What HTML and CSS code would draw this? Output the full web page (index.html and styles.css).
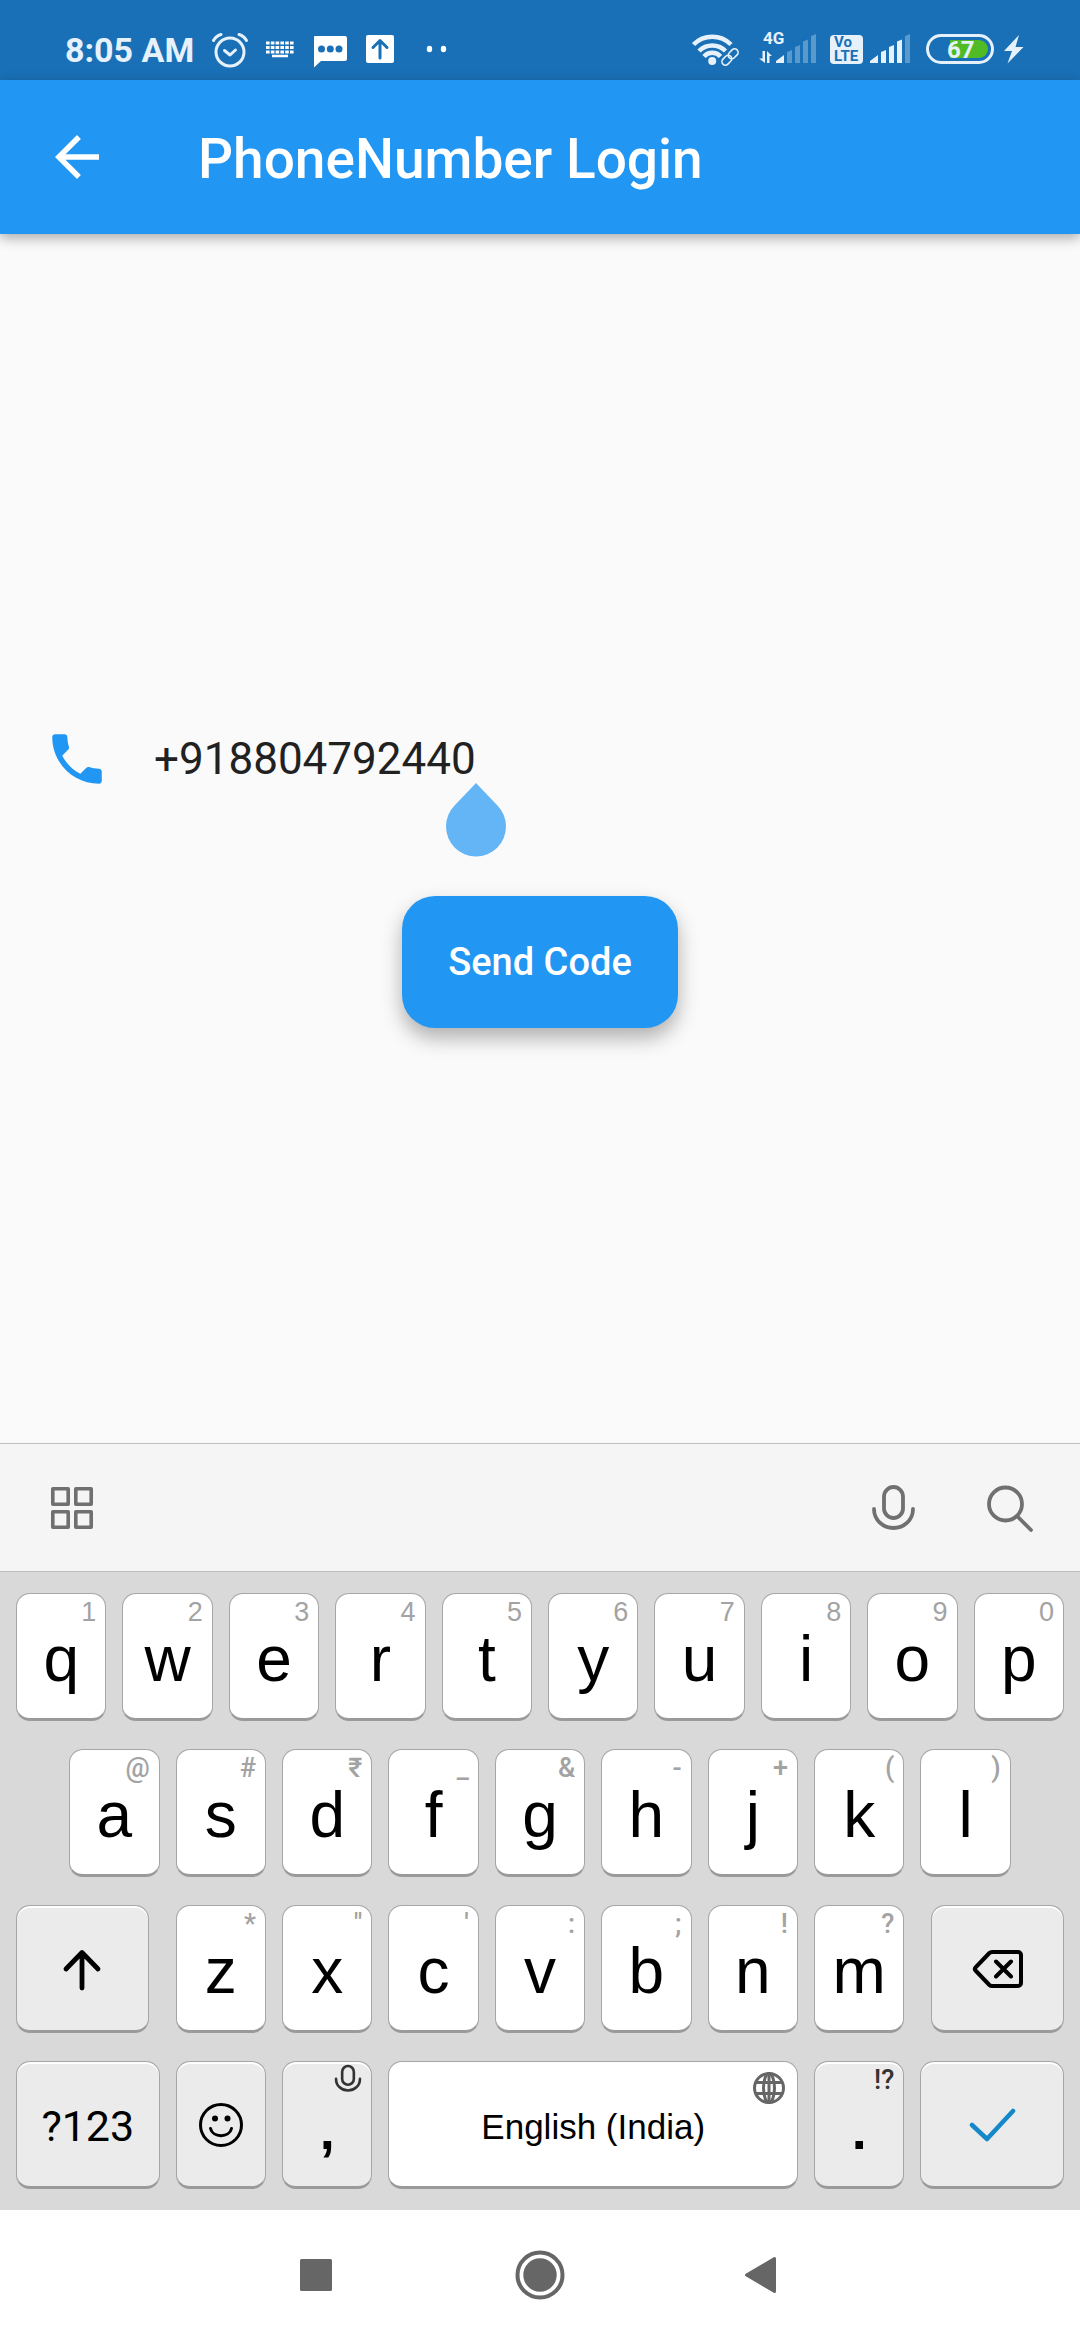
FILE: index.html
```html
<!DOCTYPE html>
<html lang="en">
<head>
<meta charset="utf-8">
<meta name="viewport" content="width=device-width, initial-scale=1">
<title>PhoneNumber Login</title>
<link rel="stylesheet" href="styles.css">
</head>
<body>
<div class="screen">
  <div class="status">
    <div class="status-left">
      <span class="clock">8:05 AM</span>
      <svg width="36" height="36" viewBox="0 0 36 36" fill="none" stroke="#e6f1fb" stroke-width="3" stroke-linecap="round" stroke-linejoin="round"><circle cx="18" cy="20" r="14"/><path d="M12.500 18.500l5.500 4.500 5.500-5M1.500 8.500Q4 4 9 2.500M34.500 8.500Q32 4 27 2.500"/></svg>
      <svg width="36" height="36" viewBox="0 0 36 36" fill="none" stroke="#fff"><path d="M4 11h28M4 15.500h28M4 20h28" stroke-width="3" stroke-dasharray="3.600 1.200"/><path d="M10 24h16" stroke-width="2.500"/></svg>
      <svg width="36" height="36" viewBox="0 0 36 36"><path d="M3 4h30a2 2 0 0 1 2 2v21a2 2 0 0 1-2 2H9l-7 6.500V5a1 1 0 0 1 1-1z" fill="#fff"/><g fill="#1970b6"><circle cx="9.500" cy="17" r="3.500"/><circle cx="18.300" cy="17" r="3.500"/><circle cx="27" cy="17" r="3.500"/></g></svg>
      <svg width="36" height="36" viewBox="0 0 36 36"><rect x="4" y="3" width="28" height="28" rx="2" fill="#fff"/><path d="M18 26V9M11 15.500l7-7 7 7" fill="none" stroke="#1970b6" stroke-width="3" stroke-linecap="round" stroke-linejoin="round"/></svg>
      <svg width="36" height="36" viewBox="0 0 36 36" fill="#fff"><ellipse cx="17.500" cy="17" rx="2.700" ry="3.200"/><ellipse cx="31.500" cy="17" rx="2.700" ry="3.200"/></svg>
    </div>
    <div class="status-right">
      <svg width="60" height="36" viewBox="0 0 60 36" fill="none" stroke="#e6f1fb"><path d="M2.500 12.500A26.500 26.500 0 0 1 40 12.500M8 19A18.500 18.500 0 0 1 34.500 19M13 24.500A11 11 0 0 1 29.500 24.500" stroke-width="4.500"/><circle cx="21.200" cy="29" r="4" fill="#e6f1fb" stroke="none"/><g stroke-width="1.600" transform="rotate(-45 39 25)"><rect x="29" y="21.500" width="11" height="7" rx="3.500"/><rect x="38" y="21.500" width="11" height="7" rx="3.500"/></g></svg>
      <svg width="61" height="36" viewBox="0 0 61 36" fill="#e6f1fb"><text x="4" y="12" class="t-net">4G</text><path d="M3.500 19H6v12L0 26.500h3.500zM8 31V19l5 5h-2.500v7zM17 31v-2l8-6v8z"/><path d="M28 31V20l5-2v13zM36 31V15l5-2v18zM44 31V9.500l5-2V31zM52 31V4l5-2v29z" opacity=".32"/></svg>
      <svg width="34" height="36" viewBox="0 0 34 36" fill="#e6f1fb"><rect x="2" y="3" width="33" height="29" rx="4"/><text x="6" y="15" class="t-vo">Vo</text><text x="6" y="29" class="t-lte">LTE</text></svg>
      <svg width="48" height="36" viewBox="0 0 48 36" fill="#e6f1fb"><path d="M0 31v-2l8-6v8zM11 31V20l5-2v13zM19 31V15l5-2v18zM27 31V9.500l5-2V31z"/><path d="M35 31V4l5-2v29z" opacity=".32"/></svg>
      <svg width="70" height="36" viewBox="0 0 70 36" fill="#e6f1fb"><rect x="1.500" y="3.500" width="65" height="27" rx="13.500" fill="none" stroke="#e6f1fb" stroke-width="3"/><path d="M24 8h29a9 9 0 0 1 0 18H24z" fill="#4fbc26"/><text x="21" y="26" class="t-batt">67</text></svg>
      <svg width="20" height="36" viewBox="0 0 20 36" fill="#e6f1fb"><path d="M15 3L0 19h8L3.500 31.500 19.500 15H11.500z"/></svg>
    </div>
  </div>

  <header class="appbar">
    <button class="icon-btn back" aria-label="Back"><svg width="66" height="66" viewBox="0 0 24 24"><path d="M20 11H7.830l5.590-5.590L12 4l-8 8 8 8 1.410-1.410L7.830 13H20v-2z" fill="#fff"/></svg></button>
    <h1 class="title">PhoneNumber Login</h1>
  </header>

  <main class="content">
    <div class="field">
      <label for="phone" aria-label="Phone number"><svg class="block" width="66" height="66" viewBox="0 0 24 24"><path d="M6.620 10.790c1.440 2.830 3.760 5.140 6.590 6.590l2.200-2.200c.27-.27.67-.36 1.020-.24 1.120.37 2.330.57 3.570.57.55 0 1 .45 1 1V20c0 .55-.45 1-1 1-9.390 0-17-7.610-17-17 0-.55.45-1 1-1h3.500c.55 0 1 .45 1 1 0 1.250.2 2.450.57 3.570.11.35.03.74-.25 1.020l-2.200 2.200z" fill="#2196f3"/></svg></label>
      <div class="input-wrap">
        <input id="phone" class="phone" type="tel" value="+918804792440">
        <svg class="handle" width="60" height="74" viewBox="0 0 60 74"><path d="M30 0L51.200 22.200A30 30 0 1 1 8.800 22.200z" fill="#64b5f6"/></svg>
      </div>
    </div>
    <button class="send">Send Code</button>
  </main>

  <section class="keyboard" aria-label="Keyboard">
    <div class="tools">
      <button class="icon-btn" aria-label="Menu"><svg width="48" height="48" viewBox="0 0 48 48" fill="none" stroke="#707070" stroke-width="3.600" stroke-linejoin="round"><path d="M4.800 4.800h15.400v15.400H4.800zM27.800 4.800h15.400v15.400H27.800zM4.800 27.800h15.400v15.400H4.800zM27.800 27.800h15.400v15.400H27.800z"/></svg></button>
      <div class="tools-right">
        <button class="icon-btn" aria-label="Voice input"><svg width="48" height="48" viewBox="0 0 48 48" fill="none" stroke="#707070" stroke-width="3.800" stroke-linecap="round"><rect x="14" y="3" width="19" height="31" rx="9.500"/><path d="M4 25c0 11 9 19 19.500 19s19.500-8 19.500-19"/></svg></button>
        <button class="icon-btn" aria-label="Search"><svg width="48" height="48" viewBox="0 0 48 48" fill="none" stroke="#707070" stroke-width="3.800" stroke-linecap="round"><circle cx="19.500" cy="20" r="16.500"/><path d="M31.500 32.500L45 46"/></svg></button>
      </div>
    </div>
    <div class="keys">
      <button class="key"><small>1</small>q</button>
      <button class="key"><small>2</small>w</button>
      <button class="key"><small>3</small>e</button>
      <button class="key"><small>4</small>r</button>
      <button class="key"><small>5</small>t</button>
      <button class="key"><small>6</small>y</button>
      <button class="key"><small>7</small>u</button>
      <button class="key"><small>8</small>i</button>
      <button class="key"><small>9</small>o</button>
      <button class="key"><small>0</small>p</button>

      <button class="key row-two"><small class="sym">@</small>a</button>
      <button class="key"><small class="sym">#</small>s</button>
      <button class="key"><small class="sym">₹</small>d</button>
      <button class="key"><small class="sym">_</small>f</button>
      <button class="key"><small class="sym">&amp;</small>g</button>
      <button class="key"><small class="sym">-</small>h</button>
      <button class="key"><small class="sym">+</small>j</button>
      <button class="key"><small class="sym">(</small>k</button>
      <button class="key"><small class="sym">)</small>l</button>

      <button class="key fn wide shift" aria-label="Shift"><svg width="44" height="44" viewBox="0 0 44 44" fill="none" stroke="#000" stroke-width="4.800" stroke-linecap="round" stroke-linejoin="round"><path d="M22 41V6M6 22L22 5.500 38 22"/></svg></button>
      <button class="key"><small class="sym">*</small>z</button>
      <button class="key"><small class="sym">"</small>x</button>
      <button class="key"><small class="sym">'</small>c</button>
      <button class="key"><small class="sym">:</small>v</button>
      <button class="key"><small class="sym">;</small>b</button>
      <button class="key"><small class="sym">!</small>n</button>
      <button class="key"><small class="sym">?</small>m</button>
      <button class="key fn wide erase" aria-label="Backspace"><svg width="52" height="40" viewBox="0 0 52 40" fill="none" stroke="#000" stroke-width="4" stroke-linecap="round" stroke-linejoin="round"><path d="M20 3h26a3 3 0 0 1 3 3v28a3 3 0 0 1-3 3H20q-1.500 0-2.600-1L3.500 21.500q-1.500-1.500 0-3L17.400 4q1.100-1 2.600-1zM24 12.500l15 15M39 12.500l-15 15"/></svg></button>

      <button class="key fn wide mode">?123</button>
      <button class="key fn" aria-label="Emoji"><svg width="46" height="46" viewBox="0 0 46 46" fill="none" stroke="#000" stroke-width="3" stroke-linecap="round"><circle cx="23" cy="23" r="20.500"/><path d="M12.500 26.500c2 9.500 19 9.500 21 0"/><g fill="#000" stroke="none"><circle cx="17" cy="16.500" r="3"/><circle cx="29.500" cy="16.500" r="3"/></g></svg></button>
      <button class="key fn point"><small><svg class="block" width="28" height="28" viewBox="0 0 48 48" fill="none" stroke="#333" stroke-width="4.500" stroke-linecap="round"><rect x="14" y="3.500" width="20" height="32" rx="10"/><path d="M3.500 25.500c0 12 9.500 20 20.500 20s20.500-8 20.500-20"/></svg></small>,</button>
      <button class="key space"><small><svg class="block" width="32" height="32" viewBox="0 0 32 32" fill="none" stroke="#666" stroke-width="3"><circle cx="16" cy="16" r="14.500"/><ellipse cx="16" cy="16" rx="5.500" ry="14.500"/><path d="M16 1.500v29M3 10.500h26M3 21.500h26"/></svg></small>English (India)</button>
      <button class="key fn point"><small class="sym">!?</small>.</button>
      <button class="key fn wide" aria-label="Done"><svg width="48" height="36" viewBox="0 0 48 36" fill="none" stroke="#1488c8" stroke-width="4.500" stroke-linecap="round" stroke-linejoin="round"><path d="M4 18l15 14L45 4"/></svg></button>
    </div>
  </section>

  <nav class="navbar" aria-label="System">
    <button class="icon-btn" aria-label="Recent apps"><svg width="50" height="50" viewBox="0 0 50 50" fill="#666"><rect x="9" y="9" width="32" height="32" rx="1.500"/></svg></button>
    <button class="icon-btn" aria-label="Home"><svg width="50" height="50" viewBox="0 0 50 50"><circle cx="25" cy="25" r="22.500" fill="none" stroke="#666" stroke-width="4"/><circle cx="25" cy="25" r="16.700" fill="#666"/></svg></button>
    <button class="icon-btn" aria-label="Back"><svg width="50" height="50" viewBox="0 0 50 50" fill="#666" stroke="#666" stroke-width="3" stroke-linejoin="round"><path d="M35.500 8.500v33L7.500 25z"/></svg></button>
  </nav>
</div>
</body>
</html>
```

FILE: styles.css
```css
* { box-sizing: border-box; }

body {
  margin: 0;
  font-family: Roboto, "Noto Sans", sans-serif;
  background: #fafafa;
}

button {
  margin: 0;
  padding: 0;
  border: 0;
  background: none;
  font: inherit;
  color: inherit;
}

.block { display: block; }

.screen {
  display: flex;
  flex-direction: column;
  min-height: 100vh;
}

/* status bar */
.status {
  display: flex;
  justify-content: space-between;
  align-items: center;
  height: 80px;
  padding: 20px 56px 0 65px;
  background: #1970b6;
}

.status-left, .status-right { display: flex; align-items: center; }
.status-left { gap: 14px; }
.status-right { gap: 8px; }
.status svg { display: block; overflow: visible; }

.clock {
  margin-right: 4px;
  font-size: 34px;
  line-height: 40px;
  font-weight: 700;
  color: #e6f1fb;
}

.t-net { font-size: 17px; font-weight: 700; }
.t-vo { font-size: 15px; font-weight: 700; fill: #1970b6; }
.t-lte { font-size: 15px; font-weight: 700; fill: #1970b6; }
.t-batt { font-size: 24px; font-weight: 700; }

/* app bar */
.appbar {
  display: flex;
  align-items: center;
  gap: 88px;
  height: 154px;
  padding: 0 44px;
  background: #2196f3;
  box-shadow: 0 4px 12px rgba(0, 0, 0, .32);
}

.icon-btn { display: flex; align-items: center; justify-content: center; }

.title {
  margin: 0;
  padding-top: 4px;
  font-size: 55px;
  line-height: 64px;
  font-weight: 500;
  color: #fff;
}

/* form */
.content {
  flex: 1;
  display: flex;
  flex-direction: column;
  align-items: center;
  justify-content: center;
  gap: 71px;
  padding: 44px 44px 0;
}

.field {
  display: flex;
  align-items: center;
  gap: 44px;
  width: 100%;
  height: 132px;
}

.input-wrap { position: relative; flex: 1; }

.phone {
  display: block;
  width: 100%;
  padding: 0;
  border: 0;
  outline: 0;
  background: none;
  font: 400 44px/52px Roboto, sans-serif;
  color: #212121;
}

.handle { position: absolute; left: 292px; top: 50px; }

.send {
  padding: 44px 46px;
  border-radius: 33px;
  background: #2196f3;
  box-shadow: 0 10px 20px rgba(0, 0, 0, .3);
  font-size: 38px;
  line-height: 44px;
  font-weight: 500;
  color: #fff;
}

/* keyboard */
.keyboard { background: #d9d9d9; }

.tools {
  display: flex;
  align-items: center;
  justify-content: space-between;
  height: 129px;
  padding: 0 46px 0 48px;
  border-top: 1px solid #c0c0c0;
  border-bottom: 1px solid #c0c0c0;
  background: #f5f5f5;
}

.tools-right { display: flex; gap: 68px; }

.keys {
  display: grid;
  grid-template-columns: repeat(20, minmax(0, 1fr));
  gap: 28px 16px;
  padding: 21px 16px;
}

.key {
  position: relative;
  grid-column: span 2;
  display: flex;
  align-items: center;
  justify-content: center;
  height: 128px;
  padding-top: 6px;
  border: 1px solid #a6a6a6;
  border-bottom: 3px solid #9a9a9a;
  border-radius: 14px;
  background: #fff;
  font: 400 64px/72px "Liberation Sans", Arial, sans-serif;
  color: #000;
}

.key small {
  position: absolute;
  top: 2px;
  right: 9px;
  font-size: 27px;
  line-height: 32px;
  color: #a3a3a3;
}

.key small.sym { font-family: Roboto, "Noto Sans", sans-serif; font-weight: 500; }

.row-two { grid-column: 2 / span 2; }

.fn {
  padding-top: 2px;
  background: #ebebeb;
  box-shadow: inset 0 2px 0 #fff;
}

.key.fn small.sym { color: #333; }
.wide { grid-column: span 3; }
.shift { grid-column: 1 / span 3; margin-right: 11px; }
.erase { margin-left: 11px; }
.mode { padding-top: 4px; font: 400 43px/52px Roboto, sans-serif; }
.point { padding-top: 12px; font-size: 54px; font-weight: 700; }
.point small { font-weight: 400; }

.space {
  grid-column: span 8;
  font-size: 35px;
  line-height: 40px;
}

.space small { top: 10px; right: 12px; }

/* system navigation */
.navbar {
  display: flex;
  justify-content: center;
  gap: 174px;
  padding: 40px 0;
  background: #fff;
}
```
